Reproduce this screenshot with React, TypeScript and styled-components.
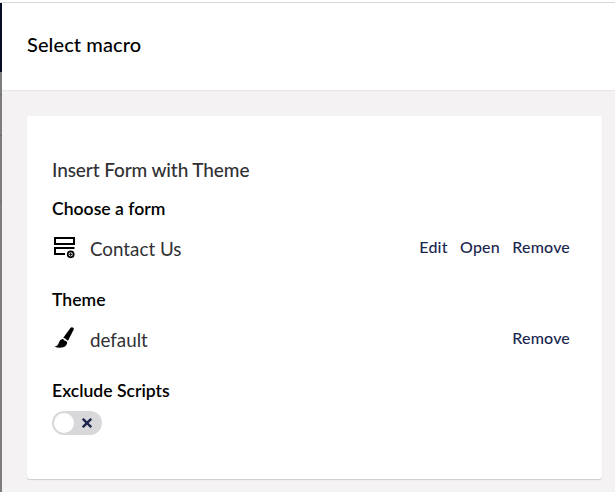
import React from "react";
import styled, { createGlobalStyle } from "styled-components";

const GlobalStyle = createGlobalStyle`
  *, *::before, *::after { box-sizing: border-box; }
  html, body { margin: 0; background: #fff; }
  body { font-family: Lato, sans-serif; color: #000; overflow: hidden; }
`;

const Page = styled.div`
  width: 616px;
  height: 496px;
  padding: 2px 1px 4px 0;
  background: #fff;
`;

const Frame = styled.div`
  display: flex;
  height: 490px;
  border-top: 1px solid #d9d9da;
`;

const Backdrop = styled.div`
  flex: 0 0 2px;
  display: flex;
  flex-direction: column;
`;

const BackdropPart = styled.div<{ $color: string; $height?: number }>`
  flex: ${(p) => (p.$height ? `0 0 ${p.$height}px` : "1")};
  background: ${(p) => p.$color};
`;

const Panel = styled.section`
  flex: 1;
  display: flex;
  flex-direction: column;
  background: #f4f2f3;
`;

const Header = styled.header`
  flex: 0 0 88px;
  display: flex;
  align-items: center;
  padding: 0 25px 6px;
  background: #fff;
  border-bottom: 1px solid #e7e5e6;
`;

const Title = styled.h1`
  margin: 0;
  font-family: "Lato Medium", Lato, sans-serif;
  font-size: 20px;
  font-weight: 500;
  line-height: 24px;
  letter-spacing: 0.1px;
  white-space: nowrap;
`;

const Card = styled.main`
  height: 363px;
  margin: 25px 13px 0 25px;
  padding: 42px 32px 0 25px;
  background: #fff;
  border-radius: 3px;
  box-shadow: 0 1px 1px rgba(0, 0, 0, 0.16);
`;

const MacroName = styled.h2`
  margin: 0 0 16px;
  font-family: "Lato Medium", Lato, sans-serif;
  font-size: 19px;
  font-weight: 500;
  line-height: 24px;
  letter-spacing: -0.1px;
  color: #303033;
`;

const Label = styled.div`
  font-size: 17.6px;
  font-weight: 600;
  line-height: 22px;
`;

const Field = styled.div`
  height: 91px;
`;

const Row = styled.div`
  display: flex;
  align-items: center;
  height: 24px;
  margin-top: 15px;
`;

const IconBox = styled.span`
  flex: 0 0 24px;
  height: 24px;
  margin-right: 14px;
  svg { display: block; }
`;

const Value = styled.span`
  flex: 1;
  padding-top: 4px;
  font-size: 18.8px;
  font-weight: 400;
  line-height: 24px;
  color: #303033;
`;

const Actions = styled.div`
  display: flex;
  gap: 12.5px;
`;

const Action = styled.button`
  padding: 0;
  border: 0;
  background: none;
  font: 500 16px/20px "Lato Medium", Lato, sans-serif;
  letter-spacing: 0.16px;
  color: #1b264f;
`;

const Toggle = styled.button`
  display: flex;
  align-items: center;
  width: 50px;
  height: 24px;
  margin-top: 9px;
  padding: 0 10px 0 2px;
  justify-content: space-between;
  border: 0;
  border-radius: 12px;
  background: #d8d7d9;
`;

const Knob = styled.span`
  width: 20px;
  height: 20px;
  border-radius: 50%;
  background: #fff;
`;

const FormIcon = () => (
  <svg width="24" height="24" viewBox="0 0 24 24" fill="none" stroke="#000" strokeWidth="2">
    <path d="M3 3H22V9H3ZM22.5 13H3V19H13" />
    <circle cx="18.7" cy="19.3" r="3" strokeWidth="1.7" />
    <path d="M18.7 17.5V21.1M16.9 19.3H20.5" strokeWidth="1" />
  </svg>
);

const BrushIcon = () => (
  <svg width="24" height="24" viewBox="0 0 24 24" fill="#000">
    <path d="M18.6 1.7Q19.6.7 20.9 1.5Q22.3 2.4 21.7 3.6L16 14.8L11.3 11.8Z" />
    <path d="M10.6 12.7L15.2 15.9Q15.2 19.7 11.2 21.2Q7 22.3 2.4 20.7Q5.9 20.1 6.8 16.8Q7.6 13.5 10.6 12.7Z" />
    <circle cx="12.8" cy="13.5" r="1" fill="#fff" />
  </svg>
);

const CrossIcon = () => (
  <svg width="10" height="10" viewBox="0 0 10 10" stroke="#1b264f" strokeWidth="2.4">
    <path d="M.8 .8L9.2 9.2M9.2 .8L.8 9.2" />
  </svg>
);

export default function App() {
  return (
    <Page>
      <GlobalStyle />
      <Frame>
        <Backdrop>
          <BackdropPart $color="#050d27" $height={69} />
          <BackdropPart $color="#7e7d7e" $height={22} />
          <BackdropPart $color="#6c6b6c" $height={1} />
          <BackdropPart $color="#7e7d7e" $height={40} />
          <BackdropPart $color="#6c6b6c" $height={1} />
          <BackdropPart $color="#7e7d7e" $height={65} />
          <BackdropPart $color="#6c6b6c" $height={1} />
          <BackdropPart $color="#7e7d7e" />
        </Backdrop>
        <Panel>
          <Header>
            <Title>Select macro</Title>
          </Header>
          <Card>
            <MacroName>Insert Form with Theme</MacroName>
            <Field>
              <Label>Choose a form</Label>
              <Row>
                <IconBox><FormIcon /></IconBox>
                <Value>Contact Us</Value>
                <Actions>
                  <Action>Edit</Action>
                  <Action>Open</Action>
                  <Action>Remove</Action>
                </Actions>
              </Row>
            </Field>
            <Field>
              <Label>Theme</Label>
              <Row>
                <IconBox><BrushIcon /></IconBox>
                <Value>default</Value>
                <Actions>
                  <Action>Remove</Action>
                </Actions>
              </Row>
            </Field>
            <Field>
              <Label>Exclude Scripts</Label>
              <Toggle role="switch" aria-checked={false} aria-label="Exclude Scripts">
                <Knob />
                <CrossIcon />
              </Toggle>
            </Field>
          </Card>
        </Panel>
      </Frame>
    </Page>
  );
}
